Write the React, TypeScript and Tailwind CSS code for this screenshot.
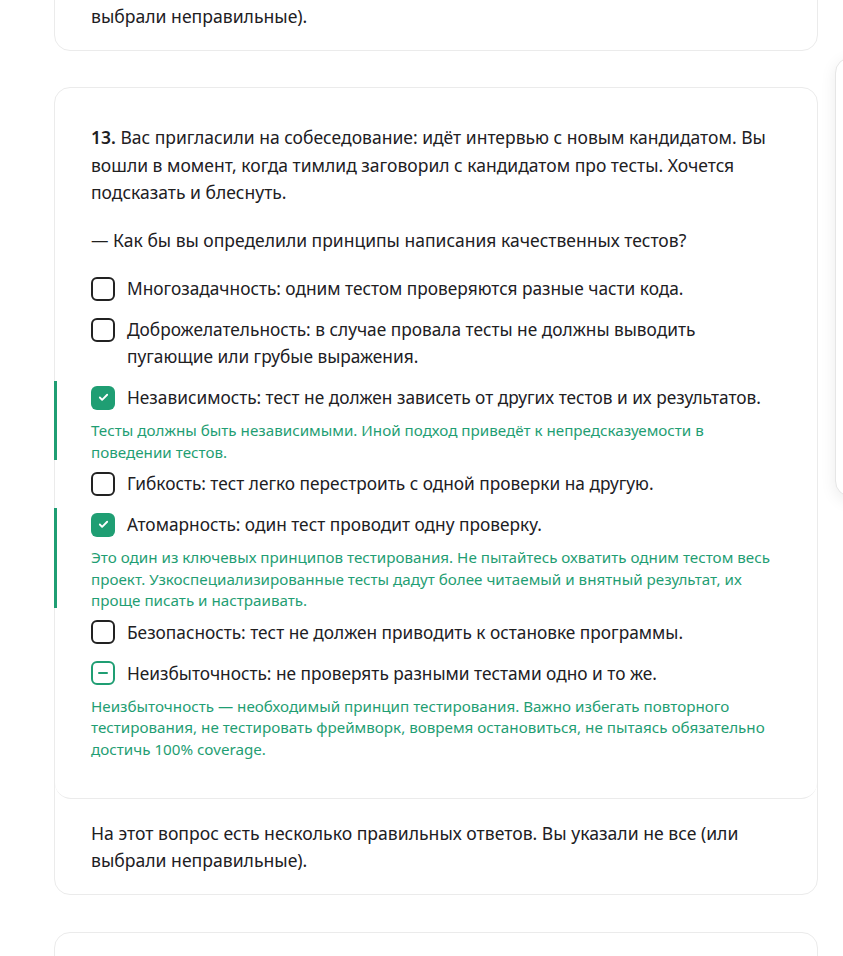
import { Check } from 'lucide-react';

type Mark = 'none' | 'checked' | 'partial';

interface Option {
  id: number;
  label: string;
  mark: Mark;
  note?: string;
  correct?: boolean;
}

const options: Option[] = [
  { id: 1, label: 'Многозадачность: одним тестом проверяются разные части кода.', mark: 'none' },
  {
    id: 2,
    label: 'Доброжелательность: в случае провала тесты не должны выводить пугающие или грубые выражения.',
    mark: 'none',
  },
  {
    id: 3,
    label: 'Независимость: тест не должен зависеть от других тестов и их результатов.',
    mark: 'checked',
    correct: true,
    note: 'Тесты должны быть независимыми. Иной подход приведёт к непредсказуемости в поведении тестов.',
  },
  { id: 4, label: 'Гибкость: тест легко перестроить с одной проверки на другую.', mark: 'none' },
  {
    id: 5,
    label: 'Атомарность: один тест проводит одну проверку.',
    mark: 'checked',
    correct: true,
    note: 'Это один из ключевых принципов тестирования. Не пытайтесь охватить одним тестом весь проект. Узкоспециализированные тесты дадут более читаемый и внятный результат, их проще писать и настраивать.',
  },
  { id: 6, label: 'Безопасность: тест не должен приводить к остановке программы.', mark: 'none' },
  {
    id: 7,
    label: 'Неизбыточность: не проверять разными тестами одно и то же.',
    mark: 'partial',
    note: 'Неизбыточность — необходимый принцип тестирования. Важно избегать повторного тестирования, не тестировать фреймворк, вовремя остановиться, не пытаясь обязательно достичь 100% coverage.',
  },
];

const feedback =
  'На этот вопрос есть несколько правильных ответов. Вы указали не все (или выбрали неправильные).';

/** Square checkbox in one of three states */
const Box = ({ mark }: { mark: Mark }) => {
  if (mark === 'checked') {
    return (
      <span className="mt-[1.5px] flex h-6 w-6 shrink-0 items-center justify-center rounded-[6px] bg-[#1f9e73]">
        <Check className="h-[11px] w-[11px] text-white" strokeWidth={4} />
      </span>
    );
  }
  if (mark === 'partial') {
    return (
      <span className="mt-[1.5px] flex h-6 w-6 shrink-0 items-center justify-center rounded-[6px] border-2 border-[#1f9e73]">
        <span className="h-[2px] w-[10px] rounded bg-[#1f9e73]" />
      </span>
    );
  }
  return <span className="mt-[1.5px] h-6 w-6 shrink-0 rounded-[6px] border-2 border-[#222]" />;
};

const OptionRow = ({ option }: { option: Option }) => (
  <div
    className={
      option.correct
        ? 'my-[3.5px] -ml-[37px] border-l-[3px] border-[#1f9e73] pl-[34px]'
        : 'my-[3.5px]'
    }
  >
    <label className="flex gap-3 py-[3.5px]">
      <Box mark={option.mark} />
      <span className="text-[17.3px] leading-[27px] text-[#21201f]">{option.label}</span>
    </label>
    {option.note && (
      <p className="mt-[5.5px] -mb-[3.5px] text-[15.2px] leading-[21.5px] text-[#1f9e73]">
        {option.note}
      </p>
    )}
  </div>
);

const FeedbackText = () => (
  <p className="text-[17.6px] leading-[27px] text-[#21201f]">{feedback}</p>
);

export default function App() {
  return (
    <div
      className="relative min-h-[956px] overflow-hidden bg-white"
      style={{ fontFamily: "'Noto Sans', 'Open Sans', sans-serif" }}
    >
      {/* Floating side panel, mostly off-screen */}
      <div className="absolute left-[835px] top-[57px] h-[440px] w-[300px] rounded-[16px] border border-[#e6e6e6] bg-white shadow-[0_4px_16px_rgba(0,0,0,0.08)]" />

      <div className="ml-[54px] flex w-[764px] flex-col gap-[37px] -mt-[46px]">
        {/* Previous question (tail) */}
        <div className="rounded-[16px] border border-[#ebebeb] px-9 pt-[21px] pb-5">
          <FeedbackText />
        </div>

        {/* Question 13 */}
        <div className="-mt-px rounded-[16px] border border-[#ebebeb]">
          <div className="rounded-[16px] border-b border-[#ebebeb] px-9 pt-9 pb-[38px]">
            <p className="text-[17.5px] leading-[27.5px] text-[#21201f]">
              <b className="font-semibold">13.</b> Вас пригласили на собеседование: идёт интервью с новым
              кандидатом. Вы вошли в момент, когда тимлид заговорил с кандидатом про тесты. Хочется
              подсказать и блеснуть.
            </p>
            <p className="mt-5 text-[17.5px] leading-[27.5px] text-[#21201f]">
              — Как бы вы определили принципы написания качественных тестов?
            </p>
            <div className="mt-[14px] flex flex-col">
              {options.map((o) => (
                <OptionRow key={o.id} option={o} />
              ))}
            </div>
          </div>
          <div className="px-9 pt-[21px] pb-5">
            <FeedbackText />
          </div>
        </div>

        {/* Next question (head) */}
        <div className="h-[200px] rounded-[16px] border border-[#ebebeb]" />
      </div>
    </div>
  );
}
